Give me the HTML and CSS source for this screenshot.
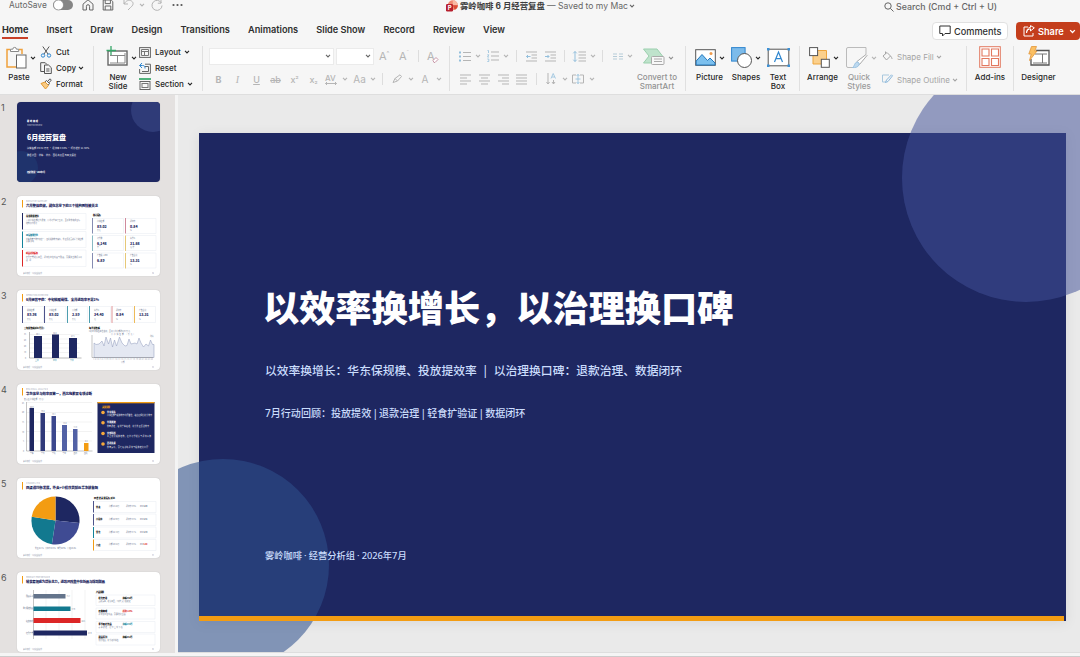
FILE: index.html
```html
<!DOCTYPE html>
<html lang="zh-CN">
<head>
    <meta charset="UTF-8">
    <title>雾岭咖啡6月经营复盘</title>
    <link rel="stylesheet" href="styles.css">
</head>
<body>
<svg class="defs">
    <symbol id="chev" viewBox="0 0 6 4"><path d="M1 .8 3 2.9 5 .8" fill="none" stroke="currentColor" stroke-width="1.1"/></symbol>
</svg>

<div class="app">
    <!-- 标题栏 -->
    <div class="titlebar">
        <div class="quick">
            <span class="autosave">AutoSave</span>
            <svg class="toggle" width="20" height="12" viewBox="0 0 20 12"><rect x="0" y="1" width="20" height="10" rx="5" fill="#858585" stroke="none"/><circle cx="5.5" cy="6" r="5" fill="#fff" stroke="#777" stroke-width=".6"/></svg>
            <svg class="q-home" width="12" height="12" viewBox="0 0 12 12"><path d="M1 5.2 6 .8l5 4.4V11H7.6V7.3a1.6 1.6 0 0 0-3.2 0V11H1z"/></svg>
            <svg class="q-save" width="12" height="12" viewBox="0 0 12 12"><path d="M1.2 1h8l1.6 1.6V11H1.2zM3.2 1v3.6h5.2V1M3.2 11V7h5.6v4"/></svg>
            <svg class="q-undo pale" width="12" height="12" viewBox="0 0 12 12"><path d="M1 1v4h4M1 5c2-3.500 5-4.500 7.500-3 2.800 2 1.500 4.500-1 6.500L5 11"/></svg>
            <svg class="q-chev pale c" width="6" height="4"><use href="#chev"/></svg>
            <svg class="q-redo pale" width="12" height="12" viewBox="0 0 12 12"><path d="M10 1v3.200H6.800M10.400 4A5 5 0 1 0 11 6.500"/></svg>
            <svg class="q-more" width="11" height="4" viewBox="0 0 11 4"><g fill="#555" stroke="none"><circle cx="1.500" cy="2" r="1.100"/><circle cx="5.500" cy="2" r="1.100"/><circle cx="9.500" cy="2" r="1.100"/></g></svg>
        </div>
        <div class="doc">
            <svg width="12" height="12" viewBox="0 0 12 12"><g stroke="none"><circle cx="6.800" cy="5.200" r="5" fill="#f08a73"/><path d="M6.800.2a5 5 0 0 1 5 5h-5z" fill="#f8b9a4"/><path d="M6.800 5.200h5a5 5 0 0 1-3 4.500z" fill="#db4b36"/><rect x="0" y="4" width="7" height="7.500" rx="1.200" fill="#b7202e"/></g><text x="1.800" y="10" class="ppt">P</text></svg>
            <b>雾岭咖啡 6 月经营复盘</b>
            <span>— Saved to my Mac</span>
            <svg class="c" width="6" height="4"><use href="#chev"/></svg>
        </div>
        <div class="search">
            <svg width="10" height="10" viewBox="0 0 10 10"><circle cx="4" cy="4" r="3.200"/><path d="M6.400 6.400 9.500 9.500"/></svg>
            <span>Search (Cmd + Ctrl + U)</span>
        </div>
    </div>

    <!-- 选项卡 -->
    <div class="tabs">
        <span class="tab current">Home</span>
        <span class="tab">Insert</span>
        <span class="tab">Draw</span>
        <span class="tab">Design</span>
        <span class="tab">Transitions</span>
        <span class="tab">Animations</span>
        <span class="tab">Slide Show</span>
        <span class="tab">Record</span>
        <span class="tab">Review</span>
        <span class="tab">View</span>
        <div class="actions">
            <span class="btn comments"><svg width="12" height="12" viewBox="0 0 12 12"><path d="M.8 1h10.400v7.500H6L3.500 11V8.500H.8z"/></svg>Comments</span>
            <span class="btn share"><svg width="12" height="12" viewBox="0 0 12 12"><path d="M5 2H1v9h9V8M3.500 8c.3-2.800 2-4 4-4.200V6l3.800-3.200L7.500.6v1.700C5 2.600 3.500 4.600 3.500 8z"/></svg>Share<svg class="c" width="7" height="5"><use href="#chev"/></svg></span>
        </div>
    </div>

    <!-- 功能区 -->
    <div class="ribbon">
        <div class="group clipboard">
            <div class="big paste">
                <div class="pic"><svg width="21" height="23" viewBox="0 0 21 23"><path d="M4 3.500H1V21h9M13 3.500h3V8" fill="none" stroke="#f0a13c" stroke-width="1.500"/><path d="M4.500 5.500V3.200h2.300a1.800 1.800 0 0 1 3.600 0h2.300v2.300z" fill="#fff" stroke="#888"/><rect x="10.500" y="9" width="9.500" height="13" fill="#fff" stroke="#666"/></svg><svg class="c" width="6" height="4"><use href="#chev"/></svg></div>
                <span>Paste</span>
            </div>
            <div class="list">
                <div><svg width="12" height="12" viewBox="0 0 12 12"><path d="M2.800.5 8 8M9.200.5 4 8" stroke="#555"/><circle cx="3" cy="9.500" r="1.700" stroke="#2f86cf"/><circle cx="9" cy="9.500" r="1.700" stroke="#2f86cf"/></svg>Cut</div>
                <div><svg width="12" height="12" viewBox="0 0 12 12"><path d="M4 9.500H.7V.7h4.500L7 2.500M4.500 3h4l2.800 2.700v5.800H4.500zM6.200 7h3.300M6.200 9h3.300" stroke="#555"/></svg>Copy<svg class="c" width="6" height="4"><use href="#chev"/></svg></div>
                <div><svg width="12" height="12" viewBox="0 0 12 12"><path d="M1 5.500 5 4l3.500 3.500L5.500 11z" fill="#f8cb85" stroke="#e39a34"/><path d="m5 3.800 1.500-1.300 3 3L8.300 7M7.500 3.500 10 .8l1.300 1.300L9 4.800" stroke="#555"/></svg>Format</div>
            </div>
        </div>

        <div class="group slides">
            <div class="big newslide">
                <div class="pic"><svg width="22" height="21" viewBox="0 0 22 21"><rect x="2" y="5" width="19" height="14" fill="#fff" stroke="#666" stroke-width="1.400"/><path d="M4 9.500h15M11.500 9.500V17M4 17h15V7" fill="none" stroke="#888"/><path d="M5 0v9M.500 4.500h9.500" stroke="#35a667" stroke-width="1.300"/></svg><svg class="c" width="6" height="4"><use href="#chev"/></svg></div>
                <span>New<br>Slide</span>
            </div>
            <div class="list">
                <div><svg width="12" height="11" viewBox="0 0 12 11"><rect x=".600" y=".600" width="10.800" height="9.800" stroke="#666"/><path d="M2.500 2.500h7v6h-7zM2.500 4.500h7M5.500 4.500v4" stroke="#777"/></svg>Layout<svg class="c" width="6" height="4"><use href="#chev"/></svg></div>
                <div><svg width="12" height="11" viewBox="0 0 12 11"><path d="M6 1.200h5.400v9.200H.6V6M3 8.500h6.500V3.500H6" stroke="#666"/><path d="M3 0 .600 2.500 3 5M.600 2.500h3c2 0 2.400 1 2.400 3" stroke="#2f86cf"/></svg>Reset</div>
                <div><svg width="12" height="12" viewBox="0 0 12 12"><path d="M0 1h12" stroke="#35a667" stroke-width="1.700"/><rect x="1" y="3.500" width="10" height="8" stroke="#666"/><rect x="3" y="5.500" width="6" height="4" stroke="#777"/></svg>Section<svg class="c" width="6" height="4"><use href="#chev"/></svg></div>
            </div>
        </div>

        <div class="group font pale">
            <div class="fields">
                <span class="field name"><svg class="c" width="6" height="4"><use href="#chev"/></svg></span>
                <span class="field size"><svg class="c" width="6" height="4"><use href="#chev"/></svg></span>
                <span class="grow">A<sup>^</sup></span>
                <span class="grow shrink">A<sup>ˇ</sup></span>
                <i class="sep"></i>
                <span class="clear">A<svg width="7" height="7" viewBox="0 0 7 7"><path d="m1 4.500 3-3 2 2-3 3H2z" fill="#fff" stroke="#c897a8"/></svg></span>
            </div>
            <div class="row font-row">
                <b>B</b><em>I</em><u>U</u><s>ab</s>
                <span>x<sup>²</sup></span><span>x<sub>₂</sub></span>
                <span class="av">AV<svg width="12" height="3" viewBox="0 0 12 3"><path d="M2 0 .5 1.500 2 3M10 0l1.500 1.500L10 3M.5 1.500h11"/></svg></span>
                <svg class="c" width="6" height="4"><use href="#chev"/></svg>
                <span class="aa">Aa</span>
                <svg class="c" width="6" height="4"><use href="#chev"/></svg>
                <i class="sep"></i>
                <svg width="11" height="10" viewBox="0 0 11 10"><path d="M1 8.500 3 4.500 8 .800l1.500 1.700L5.500 7zM3 4.500 5.500 7"/></svg>
                <svg class="c" width="6" height="4"><use href="#chev"/></svg>
                <span class="aa">A</span>
                <svg class="c" width="6" height="4"><use href="#chev"/></svg>
            </div>
        </div>

        <div class="group para pale">
            <div class="para-tools">
                <div class="row para-one">
                    <svg width="12" height="11" viewBox="0 0 12 11"><path d="M4 1.500h8M4 5.500h8M4 9.500h8"/><path d="M0 1.500h2M0 5.500h2M0 9.500h2" stroke="#93bfdc" stroke-width="2"/></svg>
                    <svg class="c" width="6" height="4"><use href="#chev"/></svg>
                    <svg width="12" height="12" viewBox="0 0 12 12"><path d="M4 2h8M4 6h8M4 10h8"/><path d="M.5.500h1V3M.3 4.800h1.500L.5 7h1.500M.3 9h1.500v2.500H.3" stroke="#93bfdc" stroke-width=".8"/></svg>
                    <svg class="c" width="6" height="4"><use href="#chev"/></svg>
                    <i class="sep"></i>
                    <svg width="11" height="11" viewBox="0 0 11 11"><path d="M0 1h11M5.500 4H11M5.500 7H11M0 10h11"/><path d="M4.500 5.500H.5M2 4 .5 5.500 2 7" stroke="#93bfdc"/></svg>
                    <svg width="11" height="11" viewBox="0 0 11 11"><path d="M0 1h11M5.500 4H11M5.500 7H11M0 10h11"/><path d="M0 5.500h4M2.500 4 4 5.500 2.500 7" stroke="#93bfdc"/></svg>
                    <i class="sep"></i>
                    <svg width="13" height="11" viewBox="0 0 13 11"><path d="M5.500 1H13M5.500 4H13M5.500 7H13M5.500 10H13"/><path d="M2 .5v10M.3 2.300 2 .5l1.700 1.800M.3 8.700 2 10.500l1.700-1.800" stroke="#93bfdc"/></svg>
                    <svg class="c" width="6" height="4"><use href="#chev"/></svg>
                    <i class="sep"></i>
                    <svg width="10" height="7" viewBox="0 0 10 7"><path d="M0 1h4M0 3.500h4M0 6h4M6 1h4M6 3.500h4M6 6h4" stroke="#b6ccd8"/></svg>
                    <svg class="c" width="6" height="4"><use href="#chev"/></svg>
                </div>
                <div class="row para-two">
                    <svg width="11" height="11" viewBox="0 0 11 11"><path d="M0 1h11M0 4h7M0 7h11M0 10h7"/></svg>
                    <svg width="11" height="11" viewBox="0 0 11 11"><path d="M0 1h11M2 4h7M0 7h11M2 10h7"/></svg>
                    <svg width="11" height="11" viewBox="0 0 11 11"><path d="M0 1h11M4 4h7M0 7h11M4 10h7"/></svg>
                    <svg width="11" height="11" viewBox="0 0 11 11"><path d="M0 1h11M0 4h11M0 7h11M0 10h11"/></svg>
                    <i class="sep"></i>
                    <svg width="10" height="12" viewBox="0 0 10 12"><path d="M2 0v11M.5 9 2 11l1.500-2M7.500 7v4M6 9l1.500 2L9 9"/><path d="M5 5.500 7.200.500l2.300 5M6 4h2.700" stroke="#93bfdc" stroke-width=".8"/></svg>
                    <svg class="c" width="6" height="4"><use href="#chev"/></svg>
                    <svg width="12" height="10" viewBox="0 0 12 10"><path d="M4 1H.5v8H4M8 1h3.500v8H8"/><path d="M6 0v10M3.500 5h5M4.500 2 6 .500 7.500 2M4.500 8 6 9.500 7.500 8" stroke="#93bfdc" stroke-width=".8"/></svg>
                    <svg class="c" width="6" height="4"><use href="#chev"/></svg>
                </div>
            </div>
            <div class="big smart">
                <div class="pic"><svg width="22" height="18" viewBox="0 0 22 18"><path d="M.5 1H14l5.500 7-5 7H.5L6 8z" fill="#bfe3cc" stroke="#9bd0ae"/><rect x="8.500" y="8.500" width="12.500" height="8" rx="1" fill="#f8f8f8" stroke="#aaa"/><path d="M11 11h8M11 13.500h8" stroke="#aaa"/></svg><svg class="c" width="6" height="4"><use href="#chev"/></svg></div>
                <span>Convert to<br>SmartArt</span>
            </div>
        </div>

        <div class="group insert">
            <div class="big picture">
                <div class="pic"><svg width="21" height="17" viewBox="0 0 21 17"><rect x=".7" y=".7" width="19.600" height="15.600" fill="#fff" stroke="#555"/><path d="M1.200 12 7 5.500l5.500 6 2.500-2.500 5 5v2H1.200z" fill="#7cc0ee" stroke="#2579bd"/><circle cx="16" cy="4.500" r="1.500" fill="#f09a4b"/></svg><svg class="c" width="6" height="4"><use href="#chev"/></svg></div>
                <span>Picture</span>
            </div>
            <div class="big shapes">
                <div class="pic"><svg width="21" height="21" viewBox="0 0 21 21"><rect x=".6" y=".6" width="13.500" height="13.500" fill="#7cbbea" stroke="#2f86cf"/><circle cx="13.500" cy="13.500" r="7" fill="#fff" stroke="#555"/></svg><svg class="c" width="6" height="4"><use href="#chev"/></svg></div>
                <span>Shapes</span>
            </div>
            <div class="big textbox">
                <div class="pic"><svg width="23" height="19" viewBox="0 0 23 19"><rect x="1.200" y="1.200" width="20.600" height="16.600" fill="#fff" stroke="#555"/><path d="M0 0h2.500v2.500H0zM20.500 0H23v2.500h-2.500zM0 16.500h2.500V19H0zM20.500 16.500H23V19h-2.500z" fill="#3d91d6"/><path d="m7.500 14 4-10 4 10M8.800 10.700h5.400" fill="none" stroke="#2f86cf" stroke-width="1.200"/></svg></div>
                <span>Text<br>Box</span>
            </div>
        </div>

        <div class="group drawing">
            <div class="big arrange">
                <div class="pic"><svg width="21" height="21" viewBox="0 0 21 21"><path d="M4 3.500h13.500V17H4z" fill="#fbd08c" stroke="#eda53d"/><rect x=".6" y=".6" width="8" height="8" fill="#fff" stroke="#555"/><rect x="12.300" y="12.300" width="8" height="8" fill="#fff" stroke="#555"/></svg><svg class="c" width="6" height="4"><use href="#chev"/></svg></div>
                <span>Arrange</span>
            </div>
            <div class="big quickstyles pale">
                <div class="pic"><svg width="22" height="22" viewBox="0 0 22 22"><path d="M7 20.500H2A1.500 1.500 0 0 1 .5 19V2A1.500 1.500 0 0 1 2 .500h18V7" fill="none" stroke="#bbb"/><path d="m11 14.500 9-7 1 1-7.500 9z" fill="#fff" stroke="#aaa"/><path d="M6.500 20.500c2-.5 1.800-5 4.500-5.500 2 .2 2.500 1.500 2 3-1 2.300-4 2.800-6.500 2.500z" fill="#bdd9ef" stroke="#9cc3e2"/></svg><svg class="c" width="6" height="4"><use href="#chev"/></svg></div>
                <span>Quick<br>Styles</span>
            </div>
            <div class="list shape-list pale">
                <div><svg width="11" height="11" viewBox="0 0 11 11"><path d="m1 5 4-3.500L8.500 5 4.500 9zM3.500 3V.5M8.500 5c1 1.200 1.500 2 1.500 3"/></svg>Shape Fill<svg class="c" width="6" height="4"><use href="#chev"/></svg></div>
                <div><svg width="11" height="11" viewBox="0 0 11 11"><path d="M7 1H.5v7H4" stroke="#a9c8de"/><path d="m3.500 8.500 1-2.500L9.500.8l1 1L6 7.500z" stroke="#8bb8dc"/></svg>Shape Outline<svg class="c" width="6" height="4"><use href="#chev"/></svg></div>
            </div>
        </div>

        <div class="group addins">
            <div class="big">
                <div class="pic"><svg width="22" height="22" viewBox="0 0 22 22"><rect x=".7" y=".7" width="20.600" height="20.600" fill="#fff" stroke="#e2785f"/><path d="M3 3h7v7H3zM12.500 3h7v7h-7zM3 12.500h7v7H3zM12.500 12.500h7v7h-7z" fill="#fff" stroke="#e2785f" stroke-width="1.100"/></svg></div>
                <span>Add-ins</span>
            </div>
        </div>
        <div class="group designer">
            <div class="big">
                <div class="pic"><svg width="22" height="21" viewBox="0 0 22 21"><path d="M8 4.500h13V19H3v-6" fill="#fff" stroke="#555" stroke-width="1.300"/><path d="M7 8h12M14.500 8v9M5 17h14" fill="none" stroke="#777"/><path d="M3.500.500h5L6.800 5H9l-7.500 9.500L3.200 8H.8z" fill="#fbc063" stroke="#e2953a" stroke-width=".8"/></svg></div>
                <span>Designer</span>
            </div>
        </div>
    </div>

    <div class="main">
        <!-- 缩略图 -->
        <div class="thumbs">
            <div class="thumb">
                <span>1</span>
                <svg class="dark" viewBox="0 0 143 80">
                    <circle cx="136" cy="8" r="22" fill="#2f3b78"/>
                    <circle cx="4" cy="66" r="17" fill="#1f336c"/>
                    <g fill="#fff">
                        <text x="10" y="20" class="t3 bold" textLength="11">雾岭咖啡</text>
                        <text x="10" y="23.500" class="t2 dim" textLength="15">MONTHLY REVIEW</text>
                        <text x="10" y="37.500" class="t7 bold" textLength="39">6月经营复盘</text>
                        <text x="10" y="46.500" class="t3" textLength="62">净销售额 89.02 万元 · 退款率 0.84% · 环比增长 21.68%</text>
                        <text x="10" y="53.500" class="t3" textLength="49">数据范围：华东、华南、西北等大区与四大渠道</text>
                        <text x="10" y="70.500" class="t2 bold" textLength="18">经营分析组 · 2026年7月</text>
                    </g>
                </svg>
            </div>

            <div class="thumb">
                <span>2</span>
                <svg viewBox="0 0 143 80">
                    <rect x="5" y="4" width="1" height="7.500" fill="#f39c12"/>
                    <text x="9" y="5.500" class="t2 dim" textLength="21">EXECUTIVE SUMMARY</text>
                    <text x="9" y="11" class="t4 bold" textLength="72">六月整体稳健，藏在总量下的三个结构倒挂被关注</text>
                    <g class="card">
                        <path d="M5.500 17.500h63.500v16H5.500zM5.500 35.500h63.500v16H5.500zM5.500 54h63.500v16.500H5.500zM75.500 22.500h31v15h-31zM75.500 39.500h31v15h-31zM75.500 57h31v15h-31zM108.500 22.500H139v15h-30.500zM108.500 39.500H139v15h-30.500zM108.500 57H139v15h-30.500z"/>
                    </g>
                    <path d="M5.500 17v16.500" stroke="#1e2761"/><path d="M5.500 35.500v16.500" stroke="#12829a"/><path d="M5.500 54v16.500" stroke="#dc2626"/>
                    <path d="M75.500 22v15.500M75.500 57v15.500" stroke="#69719f" stroke-width=".8"/><path d="M75.500 39.500V55" stroke="#6daab5" stroke-width=".8"/><path d="M108.500 22v15.500" stroke="#c66f84" stroke-width=".8"/><path d="M108.500 39.500V55M108.500 57v15.500" stroke="#e2bd55" stroke-width=".8"/>
                    <text x="9" y="21" class="t3 bold" textLength="13">总量稳健增长</text>
                    <text x="9" y="25" class="t2" textLength="54">六月净销售额保持稳健，日均订单高于五月，全月整体完成目标</text>
                    <text x="9" y="27.500" class="t2" textLength="11">结构仍待优化</text>
                    <text x="9" y="39.500" class="t3 bold" fill="#12829a" textLength="12">区域效率分化</text>
                    <text x="9" y="43.500" class="t2" textLength="57">华东体量与效率双第一，西北投放效率偏低，外卖渠道贡献近半销售额</text>
                    <text x="9" y="46" class="t2" textLength="8">需要诊断</text>
                    <text x="9" y="58" class="t3 bold" fill="#dc2626" textLength="12">新品退款偏高</text>
                    <text x="9" y="62" class="t2" textLength="56">轻食套餐增长明显，退款集中在新品与甜品，需要建立数据闭环</text>
                    <text x="9" y="64.500" class="t2" textLength="5">治理</text>
                    <text x="76" y="19.500" class="t3 bold" textLength="8">核心指标</text>
                    <g class="t2"><text x="80" y="26">净销售额</text><text x="113" y="26">退款率</text><text x="80" y="43">订单数</text><text x="113" y="43">客单价</text><text x="80" y="60">广告投入 ROI</text><text x="113" y="60">广告占比</text><text x="80" y="35">万元</text><text x="113" y="35">%</text><text x="80" y="52">单</text><text x="113" y="52">元/单</text><text x="113" y="69">%</text></g>
                    <g class="t4 bold"><text x="80" y="31.500">89.02</text><text x="113" y="31.500">0.84</text><text x="80" y="49">6,148</text><text x="113" y="49">21.68</text><text x="80" y="66">6.89</text><text x="113" y="66">13.31</text></g>
                    <text x="6" y="78" class="t2 dim" textLength="19">雾岭咖啡 · 6月经营复盘</text><text x="135" y="78" class="t2 dim">02</text>
                </svg>
            </div>

            <div class="thumb">
                <span>3</span>
                <svg viewBox="0 0 143 80">
                    <rect x="5" y="4" width="1" height="7.500" fill="#f39c12"/>
                    <text x="9" y="5.500" class="t2 dim" textLength="22">OPERATION OVERVIEW</text>
                    <text x="9" y="11" class="t4 bold" textLength="73">6月经营平稳：中旬转暖最强、全月退款率不足1%</text>
                    <g class="card"><path d="M5.500 16.500h21v16h-21zM28 16.500h21v16H28zM50.500 16.500h20v16h-20zM72.500 16.500h21v16h-21zM95 16.500h21v16H95zM117.500 16.500h21v16h-21z"/></g>
                    <path d="M5.500 16v17M27.500 16v17" stroke="#4d538b"/><path d="M50.500 16v17M72.500 16v17" stroke="#4d9eaf"/><path d="M95 16v17" stroke="#e69a9a"/><path d="M117.500 16v17" stroke="#eebb59"/>
                    <g class="t2"><text x="10" y="20.500">总销售额</text><text x="32" y="20.500">净销售额</text><text x="55" y="20.500">日均额</text><text x="77" y="20.500">客单价</text><text x="99" y="20.500">退款率</text><text x="122" y="20.500">广告占比</text><text x="10" y="29.500">万元</text><text x="32" y="29.500">万元</text><text x="55" y="29.500">万元</text><text x="77" y="29.500">元</text><text x="99" y="29.500">%</text><text x="122" y="29.500">%</text></g>
                    <g class="t4 bold"><text x="10" y="26">89.98</text><text x="32" y="26">89.02</text><text x="55" y="26">2.59</text><text x="77" y="26">34.40</text><text x="99" y="26">0.84</text><text x="122" y="26">13.31</text></g>
                    <text x="7" y="39" class="t3 bold" textLength="20">三旬销售额对比(万元)</text>
                    <text x="72" y="39" class="t3 bold" textLength="11">每日销售额</text>
                    <text x="72" y="42" class="t2" textLength="41">6月中旬销售高位波动，全月日均净额约2.97万元</text>
                    <path d="M12.500 44.500h50M12.500 49h50M12.500 53.500h50M12.500 58h50M12.500 62.500h50" stroke="#ddd" stroke-width=".4"/>
                    <path d="M12.500 42v26h52" fill="none" stroke="#777" stroke-width=".5"/>
                    <path d="M17 46h8v22h-8zM35 44.500h7v23.500h-7zM52 48h8v20h-8z" fill="#1e2761"/>
                    <g class="t2"><text x="19" y="45">30.1</text><text x="36" y="43.500">32.4</text><text x="54" y="47">27.5</text><text x="18" y="70.500" fill="#12829a">上旬</text><text x="36" y="70.500" fill="#12829a">中旬</text><text x="53" y="70.500" fill="#12829a">下旬</text><text x="7" y="45">35</text><text x="7" y="51">28</text><text x="7" y="57">20</text><text x="7" y="63">10</text><text x="8" y="69">0</text></g>
                    <path d="M77 53 79 54.500 82 54l3-3 2 5 2-9 2.500 7 2-6 2 9 2-7 2 6 3-9 2.500 6 3 3 2-.500 2-6.500 2 5 4-1 2 1 2-6 2 5 2.500 4 2.500-3 2.500 2 2-6 2 4.500h1.500V67.500H77z" fill="#e4e8f2" stroke="#8f99bb" stroke-width=".5"/>
                    <path d="M75 45v22.500h61" fill="none" stroke="#888" stroke-width=".5"/>
                    <text x="76" y="70" class="t2 dim" textLength="60">1 2 3 4 5 6 7 8 9 10 11 12 13 14 15 16 17 18 19 20 21 22 23 24</text>
                    <text x="94" y="45" class="t2" textLength="24">日净销售额（万元）</text><text x="133" y="47" class="t2">均值</text><text x="104" y="72.500" class="t2">日期</text>
                    <text x="6" y="78" class="t2 dim" textLength="19">雾岭咖啡 · 6月经营复盘</text><text x="135" y="78" class="t2 dim">03</text>
                </svg>
            </div>

            <div class="thumb">
                <span>4</span>
                <svg viewBox="0 0 143 80">
                    <rect x="5" y="4" width="1" height="7.500" fill="#f39c12"/>
                    <text x="9" y="5.500" class="t2 dim" textLength="22">REGIONAL ANALYSIS</text>
                    <text x="9" y="11" class="t4 bold" textLength="66">华东体量与效率双第一，西北拖累需专项诊断</text>
                    <text x="7" y="15.500" class="t2" textLength="21">各大区净销售额（万元）</text>
                    <path d="M9.500 18.500h65.500M9.500 28.500h65.500M9.500 38h65.500M9.500 47.500h65.500M9.500 57h65.500" stroke="#ddd" stroke-width=".4"/>
                    <path d="M9.500 18v49h66" fill="none" stroke="#888" stroke-width=".5"/>
                    <path d="M12.500 24H17v43h-4.500z" fill="#1e2761"/><path d="M23.500 29H28v38h-4.500z" fill="#303a7a"/><path d="M34.500 32H39v35h-4.500z" fill="#3b478d"/><path d="M45 41h5v26h-5zM56 45h4.500v22H56z" fill="#5261a5"/><path d="M67 59h4.500v8H67z" fill="#f39c12"/>
                    <g class="t2"><text x="13" y="23.500">22.0</text><text x="24" y="28">19.4</text><text x="35" y="31">18.1</text><text x="46" y="40">13.4</text><text x="56.500" y="44">11.8</text><text x="68" y="58">4.3</text><text x="5" y="19.500">25</text><text x="5" y="29">20</text><text x="5" y="39">15</text><text x="5" y="48.500">10</text><text x="6" y="58">5</text><text x="6" y="67.500">0</text><text x="13" y="70">华东</text><text x="24" y="70">华南</text><text x="35" y="70">华北</text><text x="45.500" y="70">华中</text><text x="56.500" y="70">西南</text><text x="67" y="70">西北</text></g>
                    <rect x="80.500" y="18" width="57" height="51" fill="#1e2761"/><rect x="80.500" y="18" width="57" height="1.300" fill="#f39c12"/>
                    <text x="85" y="23.500" class="t3 bold" fill="#f39c12" textLength="8">关键洞察</text>
                    <g fill="#f5a93c"><circle cx="86" cy="28.500" r="1.800"/><circle cx="86" cy="38.800" r="1.800"/><circle cx="86" cy="49.500" r="1.800"/><circle cx="86" cy="60" r="1.800"/></g>
                    <g class="onnavy"><text x="90" y="28.500" class="t3 bold">华东领先</text><text x="90" y="32" class="t2" textLength="45">净销售额与投放效率均居首位，继续保规模提升效率</text><text x="90" y="39" class="t3 bold">华南紧随</text><text x="90" y="42.500" class="t2" textLength="42">体量稳定，复制华东经验，提升外卖渠道效率</text><text x="90" y="49.500" class="t3 bold">中部均衡</text><text x="90" y="53" class="t2" textLength="44">重点优化投放结构，保持订单增长与退款平衡</text><text x="90" y="60" class="t3 bold">西北拖累</text><text x="90" y="63.500" class="t2" textLength="41">体量最低，需专项诊断退款与投放转化问题</text></g>
                    <text x="6" y="78" class="t2 dim" textLength="19">雾岭咖啡 · 6月经营复盘</text><text x="135" y="78" class="t2 dim">04</text>
                </svg>
            </div>

            <div class="thumb">
                <span>5</span>
                <svg viewBox="0 0 143 80">
                    <rect x="5" y="4" width="1" height="7.500" fill="#f39c12"/>
                    <text x="9" y="5.500" class="t2 dim" textLength="14">CHANNEL MIX</text>
                    <text x="9" y="11" class="t4 bold" textLength="72">四渠道均衡发展，外卖+小程序贡献近半净销售额</text>
                    <path d="M38.500 42.500v-24a24 24 0 0 1 23.900 26.500z" fill="#1e2761"/>
                    <path d="M38.500 42.500 62.400 45a24 24 0 0 1-27.500 21.300z" fill="#3f4b93"/>
                    <path d="m38.500 42.500-3.600 23.800a24 24 0 0 1-20.200-27.600z" fill="#12798f"/>
                    <path d="m38.500 42.500-23.800-3.800a24 24 0 0 1 23.800-20.200z" fill="#f39c12"/>
                    <text x="18" y="70.500" class="t2" textLength="41">外卖 26.1%　小程序 25.8%　堂食 24.9%　门店 23.2%</text>
                    <text x="77" y="21" class="t3 bold" textLength="21">四渠道关键指标对比</text>
                    <g class="card"><path d="M76.500 23.500H139v11H76.500zM76.500 36H139v11.500H76.500zM76.500 49H139v11H76.500zM76.500 61.500H139v11H76.500z"/></g>
                    <path d="M76.500 23v11.500M76.500 36v11.500" stroke="#4d538b"/><path d="M76.500 49v11" stroke="#12829a"/><path d="M76.500 61.500v11" stroke="#f39c12"/>
                    <g class="t3 bold"><text x="79" y="29.500">外卖</text><text x="79" y="42">小程序</text><text x="79" y="55">堂食</text><text x="79" y="67.500">门店</text></g>
                    <g class="t2"><text x="92" y="29">净额 23.24万</text><text x="109" y="29">退款率 0.9%</text><text x="123" y="29">ROI <tspan class="bold">6.89</tspan></text><text x="92" y="41.500">净额 22.98万</text><text x="109" y="41.500">退款率 0.8%</text><text x="123" y="41.500">ROI <tspan class="bold">6.91</tspan></text><text x="92" y="54.500">净额 22.14万</text><text x="109" y="54.500">退款率 0.7%</text><text x="123" y="54.500">ROI <tspan class="bold">6.94</tspan></text><text x="92" y="67">净额 20.66万</text><text x="109" y="67">退款率 0.8%</text><text x="123" y="67">ROI <tspan class="bold" fill="#dc2626">6.80</tspan></text></g>
                    <text x="6" y="78" class="t2 dim" textLength="19">雾岭咖啡 · 6月经营复盘</text><text x="135" y="78" class="t2 dim">05</text>
                </svg>
            </div>

            <div class="thumb">
                <span>6</span>
                <svg viewBox="0 0 143 80">
                    <rect x="5" y="4" width="1" height="7.500" fill="#f39c12"/>
                    <text x="9" y="5.500" class="t2 dim" textLength="24">PRODUCT PERFORMANCE</text>
                    <text x="9" y="11" class="t4 bold" textLength="79">轻食套餐成为增长主力，退款风险集中在新品与爆款甜品</text>
                    <path d="M29 18v49M42 18v49M55 18v49M68 18v49" stroke="#ddd" stroke-width=".4"/><path d="M16.500 18v49" stroke="#888" stroke-width=".5"/>
                    <path d="M16.500 22h32v4.500h-32z" fill="#64748b"/><path d="M16.500 34.500h37V39h-37z" fill="#12798f"/><path d="M16.500 46h47v5h-47z" fill="#dc2626"/><path d="M16.500 58.500H70v5H16.500z" fill="#1e2761"/>
                    <g class="t2"><text x="9" y="25">甜品系列</text><text x="6" y="37.300" textLength="10">季节限定饮品</text><text x="9" y="49.500">经典咖啡</text><text x="9" y="61.500">轻食套餐</text><text x="49.500" y="25">15.1</text><text x="54.500" y="37.500">17.9</text><text x="64.500" y="49.500">22.6</text><text x="71" y="61.500">25.9</text></g>
                    <text x="79" y="20.500" class="t3 bold" textLength="8">产品洞察</text>
                    <g class="card"><path d="M79 23h59v10.500H79zM79 36h59v11H79zM79 49.500h59v11H79zM79 62h59v11H79z"/></g>
                    <g class="t3 bold"><text x="81.500" y="26.500">轻食套餐</text><text x="81.500" y="39.500">经典咖啡</text><text x="81.500" y="52.500">季节限定饮品</text><text x="81.500" y="65.500">甜品系列</text><text x="105.500" y="26.500" textLength="10">净额 25.9万</text><text x="105.500" y="39.500" fill="#dc2626" textLength="10">退款 1.23%</text><text x="105.500" y="52.500" fill="#12829a" textLength="10">净额 17.9万</text><text x="105.500" y="65.500" textLength="10">净额 15.1万</text></g>
                    <g class="t2"><text x="81.500" y="30" textLength="32">贡献最高，增长明显，7月扩大门店验证</text><text x="81.500" y="43" textLength="27">退款集中在新品，需要优化出品</text><text x="81.500" y="56" textLength="24">表现稳定，保持上新节奏</text><text x="81.500" y="69" textLength="20">优化组合，提升连带销售</text></g>
                    <text x="6" y="78" class="t2 dim" textLength="19">雾岭咖啡 · 6月经营复盘</text><text x="135" y="78" class="t2 dim">06</text>
                </svg>
            </div>
        </div>

        <!-- 当前幻灯片 -->
        <div class="canvas">
            <div class="slide">
                <h1>以效率换增长，以治理换口碑</h1>
                <p class="sub">以效率换增长：华东保规模、投放提效率<span class="bar">|</span>以治理换口碑：退款治理、数据闭环</p>
                <p class="next">7月行动回顾：投放提效 | 退款治理 | 轻食扩验证 | 数据闭环</p>
                <p class="foot">雾岭咖啡 · 经营分析组 · 2026年7月</p>
                <i class="gold"></i>
            </div>
            <i class="circle top"></i>
            <i class="circle bottom"></i>
        </div>
    </div>
    <div class="bottomline"></div>
</div>
</body>
</html>
```

FILE: styles.css
```css
* {
    margin: 0;
    padding: 0;
    box-sizing: border-box;
}

body {
    font-family: Inter, "Noto Sans CJK SC", sans-serif;
    font-size: 8px;
    color: #262626;
    overflow: hidden;
}

.defs {
    display: none;
}

svg {
    display: block;
    flex: none;
    overflow: visible;
}

.app {
    width: 1080px;
    height: 657px;
    display: flex;
    flex-direction: column;
    background-color: #f6f6f6;
}

/* 标题栏 */
.titlebar {
    height: 12px;
    display: flex;
    font-size: 9px;
    line-height: 12px;
    color: #666;
}

.titlebar svg,
.btn svg {
    fill: none;
    stroke: currentColor;
    stroke-width: 1;
}

.quick {
    width: 446px;
    padding-left: 9px;
    display: flex;
    align-items: center;
    height: 10px;
}

.autosave {
    width: 44px;
    font-size: 8.4px;
}

.q-home {
    margin-left: 9px;
}

.q-save {
    margin-left: 8px;
}

.q-undo {
    margin-left: 9px;
}

.q-chev {
    margin-left: 4px;
}

.q-redo {
    margin-left: 6px;
}

.q-more {
    margin-left: 9px;
}

.pale {
    color: #b5b5b5;
}

.doc {
    width: 438px;
    display: flex;
    align-items: center;
    height: 11px;
    white-space: nowrap;
}

.doc b {
    margin-left: 2px;
    width: 87px;
    font-size: 8.4px;
    color: #3d3d3d;
}

.doc span {
    width: 82px;
    font-size: 8.6px;
}

.titlebar .ppt {
    font-size: 6px;
    font-weight: bold;
    fill: #fff;
    stroke: none;
}

.search {
    display: flex;
    align-items: center;
    gap: 2px;
    height: 13px;
    font-weight: 500;
    font-size: 8.8px;
    white-space: nowrap;
}

/* 选项卡 */
.tabs {
    height: 28px;
    padding: 8px 0 0 2px;
    display: flex;
    gap: 18.1px;
    font-size: 9.2px;
    font-weight: 600;
    color: #303030;
}

.tab {
    height: 20px;
    line-height: 20px;
    white-space: nowrap;
}

.tab.current {
    font-weight: 700;
    height: 19px;
    border-bottom: 2px solid #c8412a;
}

.actions {
    margin-left: auto;
    height: 18px;
    margin-top: 2px;
    display: flex;
    gap: 8px;
}

.btn {
    display: flex;
    align-items: center;
    height: 18px;
    border-radius: 4px;
    font-size: 9.2px;
}

.comments {
    width: 76px;
    padding-left: 6px;
    gap: 3px;
    background-color: #fff;
    border: 1px solid #e1e1e1;
    font-weight: 500;
}

.share {
    width: 64px;
    padding-left: 7px;
    gap: 3px;
    background-color: #c43e1c;
    color: #fff;
}

.share .c {
    margin-left: 2px;
}

/* 功能区 */
.ribbon {
    height: 55px;
    padding: 6px 0 3px;
    display: flex;
    border-bottom: 1px solid #dedede;
    font-weight: 500;
}

.group {
    display: flex;
    border-right: 1px solid #e0e0e0;
}

.group svg {
    fill: none;
}

.pale > svg,
.row svg,
.shape-list svg {
    stroke: currentColor;
}

.group svg.c,
.titlebar svg.c,
.btn svg.c {
    stroke: none;
}

.big {
    text-align: center;
    line-height: 8.5px;
    white-space: nowrap;
}

.big > span {
    display: block;
}

.pic {
    display: flex;
    height: 27px;
    justify-content: center;
}

.pic .c {
    margin: 10px 0 0 3px;
}

.list {
    display: flex;
    flex-direction: column;
    margin-top: -2px;
    white-space: nowrap;
}

.list div {
    display: flex;
    flex: none;
    align-items: center;
    height: 16px;
    gap: 4px;
}

.clipboard {
    width: 94px;
}

.paste {
    width: 37px;
    padding-left: 4px;
}

.paste .pic {
    padding-left: 2px;
    justify-content: flex-start;
}

.paste > span {
    width: 30px;
}

.clipboard .list {
    margin-left: 3px;
}

.clipboard .list .c {
    margin-left: -2px;
}

.slides {
    width: 109px;
}

.newslide {
    width: 36px;
    margin-left: 9px;
}

.newslide > span {
    width: 30px;
}

.slides .list .c {
    margin-left: -1px;
}

.font {
    width: 247px;
    flex-direction: column;
    padding-left: 6px;
}

.fields {
    display: flex;
    height: 20px;
    align-items: center;
}

.field {
    height: 17px;
    background-color: #fff;
    border: 1px solid #ebebeb;
    display: flex;
    justify-content: flex-end;
    align-items: center;
    padding-right: 2px;
    color: #666;
}

.name {
    width: 125px;
}

.size {
    width: 38px;
    margin-left: 2px;
}

.grow {
    width: 20px;
    padding-left: 5px;
    font-size: 11px;
    font-weight: 400;
    display: flex;
}

.grow sup {
    font-size: 6px;
    line-height: 8px;
}

.sep {
    width: 1px;
    height: 12px;
    background-color: #ddd;
}

.fields .sep {
    margin-left: 4px;
}

.clear {
    margin-left: 8px;
    display: flex;
    align-items: flex-end;
    font-size: 11px;
    font-weight: 400;
}

.clear svg {
    margin-left: -3px;
}

.row {
    display: grid;
    height: 20px;
    align-items: center;
    justify-items: center;
}

.font-row {
    margin-top: 3px;
    grid-template-columns: repeat(6, 19px) 16px 12px 17px 9px 10px 20px 7px 22px 6px;
    font-size: 9px;
}

.font-row em {
    font-family: "Liberation Serif", serif;
    font-size: 10px;
}

.font-row sup,
.font-row sub {
    font-size: 7px;
    line-height: 0;
}

.font-row sup {
    vertical-align: 1px;
}

.font-row sub {
    vertical-align: 0;
}

.av {
    font-size: 8px;
    line-height: 8px;
}

.aa {
    font-size: 10px;
    font-weight: 400;
}

.para {
    width: 236px;
}

.para-tools {
    width: 184px;
    padding-left: 6px;
}

.para-one {
    grid-template-columns: 17px 10px 19px 8px 12px 18px 20px 8px 22px 5px 14px 17px 8px;
}

.para-two {
    margin-top: 3px;
    grid-template-columns: 18px 20px 18px 19px 10px 19px 9px 18px 10px;
}

.smart {
    width: 46px;
    color: #929292;
}

.smart .pic {
    padding: 2px 0 0 3px;
}

.smart .pic .c {
    margin-top: 8px;
}

.insert {
    width: 114px;
}

.insert .big {
    flex: none;
}

.picture {
    width: 38px;
    margin-left: 6px;
}

.picture > span {
    width: 35px;
}

.shapes > span {
    width: 32px;
}

.insert .pic,
.drawing .pic {
    justify-content: flex-start;
    padding: 1px 0 0 3px;
}

.shapes {
    width: 34px;
}

.textbox {
    width: 28px;
}

.insert .picture .pic {
    padding-top: 3px;
}

.insert .pic .c,
.drawing .pic .c {
    margin-top: 9px;
}

.insert .picture .pic .c {
    margin-top: 7px;
}

.insert .shapes .pic {
    padding-left: 1px;
}

.insert .textbox .pic {
    padding-top: 2px;
    padding-left: 3px;
}

.drawing .pic {
    padding-left: 0;
}

.drawing {
    width: 167px;
}

.arrange {
    width: 37px;
    margin-left: 9px;
}

.arrange > span {
    margin-left: -2px;
    width: 31px;
}

.quickstyles {
    width: 37px;
}

.quickstyles > span {
    width: 26px;
    color: #9a9a9a;
}

.shape-list {
    color: #a5a5a5;
    margin: -1px 0 0 -1px;
    font-weight: 400;
    font-size: 8px;
}

.shape-list div {
    height: 23px;
}

.shape-list .c {
    margin-left: -2px;
}

.addins {
    width: 47px;
}

.addins .big {
    width: 46px;
}

.designer {
    border: 0;
}

.designer .big {
    width: 49px;
}

/* 主体 */
.main {
    height: 558px;
    display: flex;
}

.thumbs {
    width: 178px;
    padding: 7px 0 0 1px;
    background-color: #e4e1e0;
    border-right: 3px solid #f4f4f4;
    display: flex;
    flex-direction: column;
    gap: 14px;
}

.thumb {
    height: 80px;
    display: flex;
}

.thumb > span {
    width: 16px;
    font-size: 9px;
    line-height: 12px;
    color: #555;
}

.thumb > svg {
    width: 143px;
    height: 80px;
    border-radius: 4px;
    overflow: hidden;
    background-color: #fff;
    box-shadow: 0 0 1px #aaa;
}

.thumb > svg.dark {
    background-color: #1e2761;
}

.thumb text {
    font-family: "Noto Sans CJK SC", sans-serif;
}

.t2 {
    font-size: 1.8px;
    fill: #66708a;
}

.t3 {
    font-size: 2.2px;
}

.t4 {
    font-size: 3.5px;
    fill: #1e2761;
}

.t7 {
    font-size: 7px;
}

.bold {
    font-weight: 800;
}

.dim {
    opacity: .7;
}

.dark .t2,
.onnavy text {
    fill: #fff;
}

.card {
    fill: #fff;
    stroke: #e7eaf0;
    stroke-width: .5;
}

.canvas {
    position: relative;
    flex: 1;
    overflow: hidden;
    padding: 38px 0 0 21px;
    background-color: #eaeaea;
    border-bottom: 1px solid #dedede;
    font-family: "Noto Sans", "Noto Sans CJK SC", sans-serif;
}

.slide {
    width: 867px;
    height: 488px;
    padding: 147px 0 0 66px;
    background-color: #1e2761;
    color: #fff;
    box-shadow: 0 2px 12px rgba(0, 0, 0, .08);
    white-space: nowrap;
}

.slide h1,
.slide p {
    position: relative;
    z-index: 2;
}

.slide h1 {
    font-size: 36.2px;
    line-height: 56px;
    font-weight: 800;
    margin-left: -2px;
}

.slide p {
    color: #cadcfc;
    font-weight: 500;
}

.slide .sub {
    margin-top: 24px;
    font-size: 11.77px;
    line-height: 20px;
}

.bar {
    display: inline-block;
    width: 17px;
    text-align: center;
}

.slide .next {
    margin-top: 24px;
    font-size: 10.05px;
    line-height: 18px;
    word-spacing: -1.45px;
}

.slide .foot {
    margin-top: 125px;
    font-size: 9.25px;
    line-height: 18px;
    word-spacing: -.3px;
}

.gold {
    position: absolute;
    z-index: 2;
    left: 21px;
    top: 521px;
    width: 865px;
    height: 5px;
    background-color: #f39c12;
}

.circle {
    position: absolute;
    border-radius: 50%;
}

.circle.top {
    left: 724px;
    top: -41px;
    width: 248px;
    height: 248px;
    background-color: rgba(66, 80, 152, .52);
}

.circle.bottom {
    left: -61px;
    top: 364px;
    width: 212px;
    height: 212px;
    background-color: rgba(46, 80, 140, .56);
}

.bottomline {
    height: 4px;
    background-color: #f5f5f5;
    border-bottom: 1px solid #ccc;
}
```
